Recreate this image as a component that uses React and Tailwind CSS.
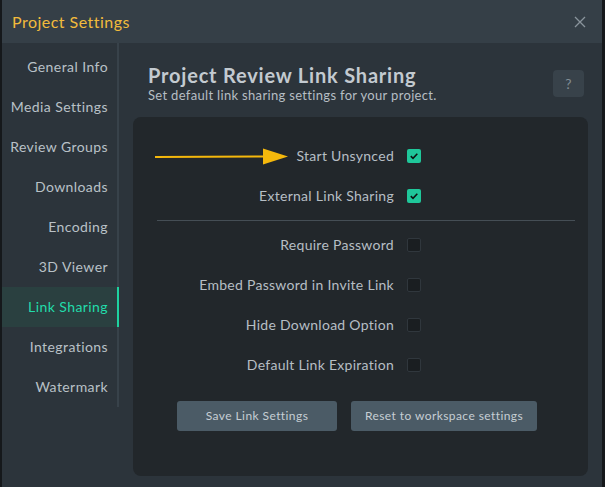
import { useState } from "react";

const menu = [
  "General Info",
  "Media Settings",
  "Review Groups",
  "Downloads",
  "Encoding",
  "3D Viewer",
  "Link Sharing",
  "Integrations",
  "Watermark",
];

const options = [
  { label: "Start Unsynced", on: true },
  { label: "External Link Sharing", on: true },
  { label: "Require Password", on: false, divider: true },
  { label: "Embed Password in Invite Link", on: false },
  { label: "Hide Download Option", on: false },
  { label: "Default Link Expiration", on: false },
];

function Checkbox({ checked, onClick }) {
  return (
    <button
      onClick={onClick}
      className={`w-[14px] h-[14px] rounded-[2px] flex items-center justify-center ${
        checked ? "bg-[#1fc79a]" : "bg-[#1a1e21] border border-[#30373d]"
      }`}
    >
      {checked && (
        <svg width="10" height="10" viewBox="0 0 10 10">
          <path d="M1.8 5.2 L4 7.3 L8.3 2.8" fill="none" stroke="#0d1512" strokeWidth="1.6" />
        </svg>
      )}
    </button>
  );
}

export default function App() {
  const [active, setActive] = useState("Link Sharing");
  const [values, setValues] = useState(options.map((o) => o.on));

  const toggle = (i) => {
    setValues((prev) => prev.map((v, j) => (j === i ? !v : v)));
  };

  return (
    <div
      className="w-[605px] h-[487px] bg-[#15181b] flex overflow-hidden"
      style={{ fontFamily: "Lato, 'Open Sans', sans-serif" }}
    >
      <div className="ml-[2px] w-[600px] flex flex-col">
        <div className="h-[43px] bg-[#353f47] flex items-center justify-between pl-[10px] pr-[16px]">
          <span className="text-[16px] tracking-[0.03em] text-[#f2bb3c]">Project Settings</span>
          <svg width="12" height="12" viewBox="0 0 12 12">
            <path d="M1 1 L11 11 M11 1 L1 11" stroke="#8a949c" strokeWidth="1.3" />
          </svg>
        </div>

        <div className="flex-1 bg-[#2c343b] flex">
          <div className="w-[117px] self-start">
            <ul className="pt-[4px] border-r-2 border-[#38424a]">
              {menu.map((item) => (
                <li
                  key={item}
                  onClick={() => setActive(item)}
                  className={`h-[40px] flex items-center justify-end pr-[9px] pb-[1px] text-[14px] tracking-[0.03em] cursor-pointer ${
                    active === item
                      ? "bg-[#2a4040] text-[#22dcab] border-r-2 border-[#1ed3a0] mr-[-2px]"
                      : "text-[#b9c1c7]"
                  }`}
                >
                  {item}
                </li>
              ))}
            </ul>
          </div>

          <div className="flex-1 pl-[14px] pr-[14px] flex flex-col">
            <div className="flex justify-between items-start pt-[20px] pl-[15px] pr-[4px]">
              <div>
                <h1 className="text-[20px] font-bold leading-[24px] tracking-[0.04em] text-[#c3cad0]">
                  Project Review Link Sharing
                </h1>
                <p className="text-[13px] leading-[16px] tracking-[0.025em] text-[#b6bec4]">
                  Set default link sharing settings for your project.
                </p>
              </div>
              <button className="mt-[7px] w-[31px] h-[27px] rounded-[4px] bg-[#38424a] text-[#838d95] text-[14px] flex items-center justify-center">
                ?
              </button>
            </div>

            <div className="relative mt-[14px] mb-[11px] flex-1 bg-[#22272b] rounded-[8px] pt-[18px]">
              <svg
                className="absolute left-[22px] top-[31px]"
                width="134"
                height="18"
                viewBox="0 0 134 18"
              >
                <path d="M0 8 L110 7.5 L110 9.5 L0 10 Z" fill="#f5b80c" />
                <path d="M108 0.5 L133 8.5 L108 16.5 Z" fill="#f5b80c" />
              </svg>

              {options.map((o, i) => (
                <div key={o.label}>
                  {o.divider && (
                    <div className="h-px bg-[#454e55] ml-[24px] mr-[13px] mt-[5px] mb-[3px]" />
                  )}
                  <div className="h-[40px] flex items-center">
                    <span className="w-[261px] text-right text-[14px] tracking-[0.02em] text-[#b6bec4]">
                      {o.label}
                    </span>
                    <div className="ml-[13px] pt-[1px]">
                      <Checkbox checked={values[i]} onClick={() => toggle(i)} />
                    </div>
                  </div>
                </div>
              ))}

              <div className="flex gap-[14px] ml-[44px] mt-[17px]">
                <button className="w-[160px] h-[30px] rounded-[3px] bg-[#4b5b66] text-[12px] tracking-[0.035em] text-[#c6ced4]">
                  Save Link Settings
                </button>
                <button className="w-[186px] h-[30px] rounded-[3px] bg-[#4b5b66] text-[12px] tracking-[0.035em] text-[#c6ced4]">
                  Reset to workspace settings
                </button>
              </div>
            </div>
          </div>
        </div>
      </div>
    </div>
  );
}
